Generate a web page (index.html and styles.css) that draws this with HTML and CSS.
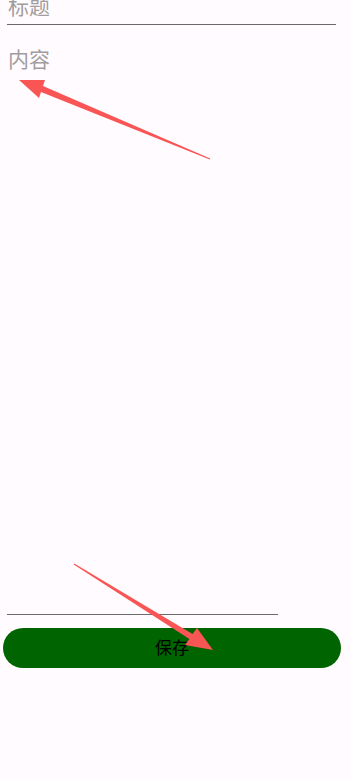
FILE: index.html
```html
<!DOCTYPE html>
<html lang="zh">
<head>
    <meta charset="UTF-8">
    <title>note</title>
    <link rel="stylesheet" href="styles.css">
</head>
<body>
    <div class="page">
        <div class="field title-field">
            <span class="hint">标题</span>
        </div>
        <div class="content-field">
            <span class="hint">内容</span>
        </div>
        <div class="bottom-line"></div>
        <button class="btn-save">保存</button>
    </div>
    <svg class="arrows" width="351" height="780" viewBox="0 0 351 780">
        <polygon points="19,80 45,80 43,86 210.2,158.6 209.8,159.4 41,92 39,98" fill="#fa5555"/>
        <polygon points="213,650 197,628 192.6,634 74.3,563.6 73.7,564.4 189.4,639 185,645" fill="#fa5555"/>
    </svg>
</body>
</html>
```

FILE: styles.css
```css
*{
    margin: 0;
    padding: 0;
    box-sizing: border-box;
}
body{
    background-color: #fffbfe;
    font-family: Roboto, "Noto Sans CJK SC", sans-serif;
    width: 351px;
    height: 780px;
    overflow: hidden;
    position: relative;
}
.page{
    display: flex;
    flex-direction: column;
    padding: 0 15px 0 7px;
}
.hint{
    font-size: 21px;
    color: #a09da0;
}
.title-field{
    height: 25px;
    border-bottom: 1px solid #6b6b6b;
    line-height: 14px;
    padding-left: 1px;
}
.content-field{
    height: 589px;
    padding-top: 23px;
    padding-left: 1px;
    line-height: 24px;
}
.bottom-line{
    width: 271px;
    height: 1px;
    background-color: #6b6b6b;
}
.btn-save{
    margin: 13px 0 0 -4px;
    width: 338px;
    height: 40px;
    border: none;
    border-radius: 20px;
    background-color: #006400;
    color: #000000;
    font-family: Roboto, "Noto Sans CJK SC", sans-serif;
    font-size: 17px;
    line-height: 40px;
    outline: none;
}
.arrows{
    position: absolute;
    left: 0;
    top: 0;
    pointer-events: none;
}
```
